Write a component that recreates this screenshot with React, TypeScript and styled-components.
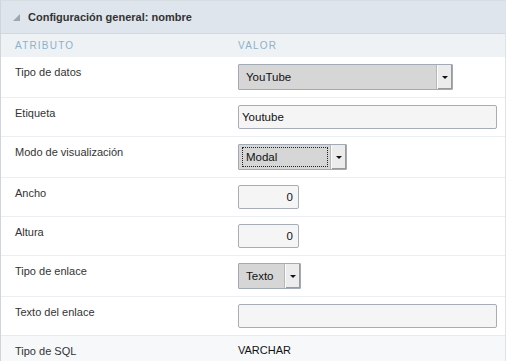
import React from "react";
import styled, { createGlobalStyle } from "styled-components";

const Global = createGlobalStyle`
  html, body { margin: 0; padding: 0; background: #ffffff; }
  body { font-family: "Liberation Sans", Arial, sans-serif; }
`;

const Panel = styled.div`
  width: 506px;
  box-sizing: border-box;
  border-left: 1px solid #cfd5db;
  border-right: 1px solid #dde3e8;
  border-top: 1px solid #d6dde3;
  background: #fff;
`;

const TitleBar = styled.div`
  height: 32px;
  display: flex;
  align-items: center;
  gap: 8px;
  padding-left: 12px;
  background: #dee5ec;
  border-bottom: 1px solid #cfdadf;
`;

const Title = styled.span`
  font-size: 11px;
  font-weight: bold;
  color: #333;
`;

const ColHead = styled.div`
  display: grid;
  grid-template-columns: 237px 1fr;
  height: 23px;
  align-items: center;
  background: #eef2f5;
`;

const ColLabel = styled.span<{ $pad?: number }>`
  padding-left: ${(p) => p.$pad ?? 0}px;
  font-size: 10px;
  letter-spacing: 1.2px;
  color: #8db1c9;
`;

const Row = styled.div<{ $alt?: boolean }>`
  display: grid;
  grid-template-columns: 237px 1fr;
  border-top: 1px solid ${(p) => (p.$alt ? "#e6ebef" : "#eceff2")};
  background: ${(p) => (p.$alt ? "#f6f8fa" : "#fff")};
  padding: 7px 8px 7px 0;
`;

const Label = styled.div`
  padding-left: 14px;
  padding-top: 1px;
  font-size: 11px;
  line-height: 14px;
  color: #333;
`;

const Value = styled.div`
  display: flex;
  align-items: center;
  min-height: 14px;
`;

const Plain = styled.span`
  font-size: 11px;
  line-height: 13px;
  color: #111;
`;

const SelectBox = styled.div<{ $w: number }>`
  width: ${(p) => p.$w}px;
  height: 26px;
  box-sizing: border-box;
  display: flex;
  background: #d6d6d6;
  border: 1px solid #a2aab6;
  border-radius: 1px;
`;

const SelectText = styled.div<{ $focus?: boolean }>`
  flex: 1;
  margin: 2px 3px 2px 3px;
  padding-left: 3px;
  display: flex;
  align-items: center;
  font-size: 11.5px;
  color: #111;
  border: 1px dotted ${(p) => (p.$focus ? "#222" : "transparent")};
`;

const Arrow = styled.div`
  width: 14px;
  display: flex;
  align-items: center;
  justify-content: center;
  background: #ececec;
  border-left: 1px solid #fafafa;
  box-shadow: inset -1px -1px 0 #9a9a9a, -1px 0 0 #b8b8b8;
`;

const Caret = styled.span`
  width: 0;
  height: 0;
  border-left: 3px solid transparent;
  border-right: 3px solid transparent;
  border-top: 3px solid #111;
`;

const Input = styled.input<{ $w?: number; $right?: boolean }>`
  width: ${(p) => (p.$w ? `${p.$w}px` : "100%")};
  height: 24px;
  box-sizing: border-box;
  margin: 0;
  padding: 0 5px 0 3px;
  font-family: "Liberation Sans", Arial, sans-serif;
  font-size: 11.5px;
  color: #111;
  text-align: ${(p) => (p.$right ? "right" : "left")};
  background: #f5f5f5;
  border: 1px solid #a6adb6;
  border-radius: 2px;
  outline: none;
`;

const Tri = () => (
  <svg width="7" height="7" viewBox="0 0 7 7">
    <polygon points="7,0 7,7 0,7" fill="#9ea6ae" />
  </svg>
);

const Select = ({ w, text, focus }: { w: number; text: string; focus?: boolean }) => (
  <SelectBox $w={w}>
    <SelectText $focus={focus}>{text}</SelectText>
    <Arrow>
      <Caret />
    </Arrow>
  </SelectBox>
);

export default function App() {
  return (
    <>
      <Global />
      <Panel>
        <TitleBar>
          <Tri />
          <Title>Configuración general: nombre</Title>
        </TitleBar>
        <ColHead>
          <ColLabel $pad={14}>ATRIBUTO</ColLabel>
          <ColLabel>VALOR</ColLabel>
        </ColHead>
        <Row style={{ borderTop: "none" }}>
          <Label>Tipo de datos</Label>
          <Value>
            <Select w={215} text="YouTube" />
          </Value>
        </Row>
        <Row>
          <Label>Etiqueta</Label>
          <Value>
            <Input defaultValue="Youtube" readOnly />
          </Value>
        </Row>
        <Row>
          <Label>Modo de visualización</Label>
          <Value>
            <Select w={109} text="Modal" focus />
          </Value>
        </Row>
        <Row>
          <Label>Ancho</Label>
          <Value>
            <Input $w={61} $right defaultValue="0" readOnly />
          </Value>
        </Row>
        <Row>
          <Label>Altura</Label>
          <Value>
            <Input $w={61} $right defaultValue="0" readOnly />
          </Value>
        </Row>
        <Row>
          <Label>Tipo de enlace</Label>
          <Value>
            <Select w={63} text="Texto" />
          </Value>
        </Row>
        <Row>
          <Label>Texto del enlace</Label>
          <Value>
            <Input readOnly />
          </Value>
        </Row>
        <Row $alt>
          <Label>Tipo de SQL</Label>
          <Value>
            <Plain>VARCHAR</Plain>
          </Value>
        </Row>
      </Panel>
    </>
  );
}
